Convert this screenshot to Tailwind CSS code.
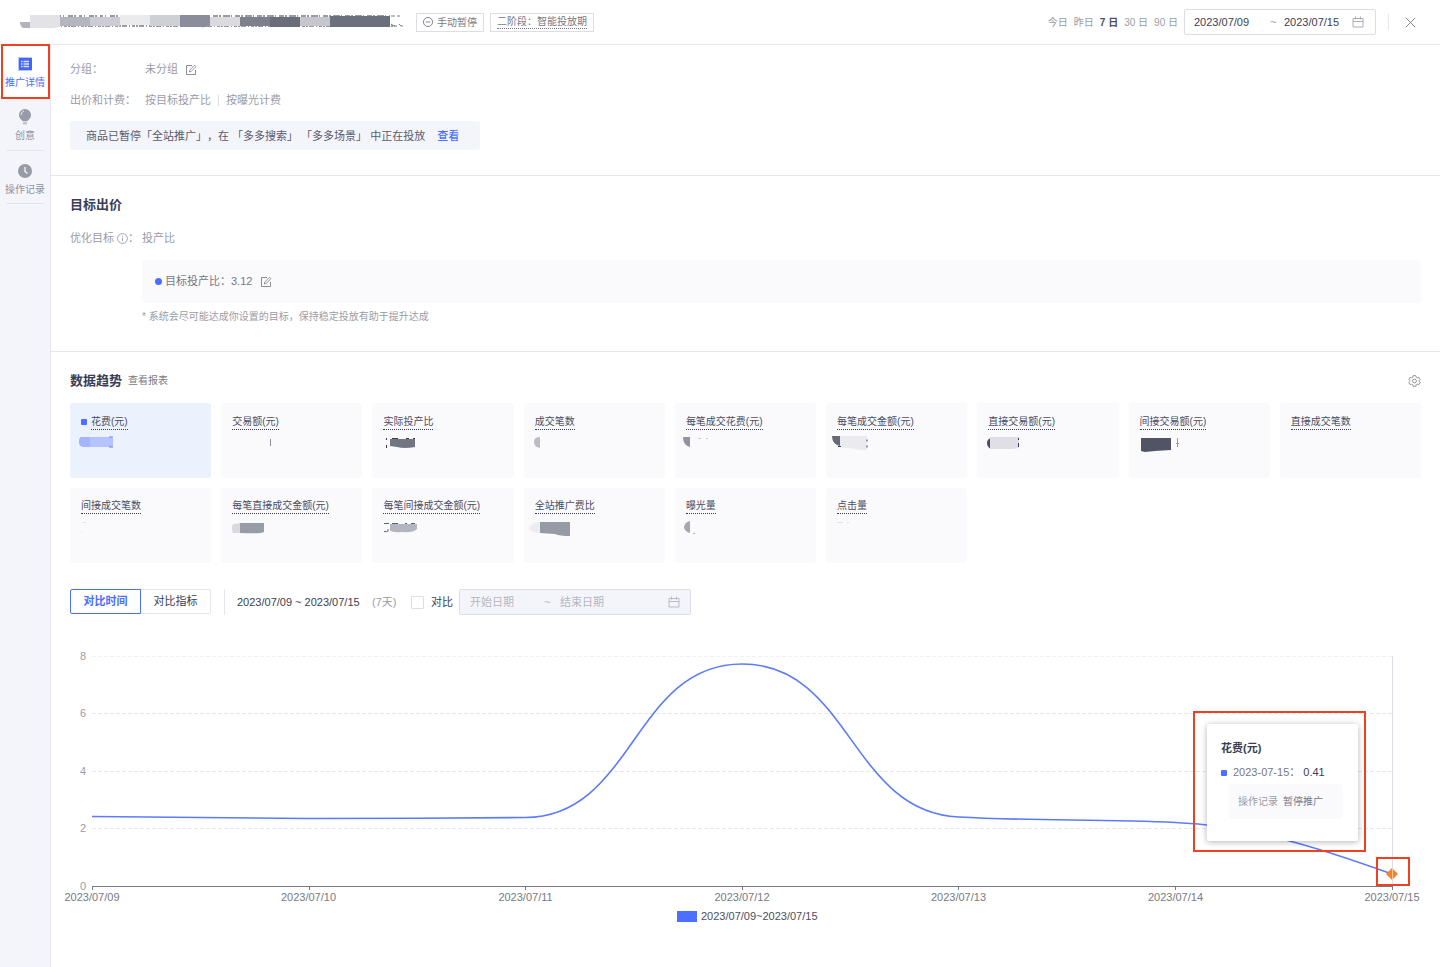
<!DOCTYPE html>
<html lang="zh-CN">
<head>
<meta charset="utf-8">
<meta name="viewport" content="width=device-width, initial-scale=1">
<title>推广详情</title>
<script src="https://cdn.jsdelivr.net/npm/@tailwindcss/browser@4"></script>
</head>
<body class="flex min-h-screen flex-col bg-white font-['Liberation_Sans','Noto_Sans_CJK_SC',sans-serif] text-[11px] leading-[17px] text-[#9a9ca7] [text-spacing-trim:space-all]">
<svg class="hidden">
  <symbol id="edit" viewBox="0 0 12 12" fill="none" stroke="currentColor"><path d="M7 1.500H1.500v9h9V6"/><path d="M4.300 8l.5-2L9.600 1.200l1.400 1.400L6.200 7.400z" stroke-width=".9"/></symbol>
  <symbol id="calendar" viewBox="0 0 12 12" fill="none" stroke="currentColor"><path d="M1 2.500h10v8.500H1zM1 5.500h10M3.500 .5v3M8.500 .5v3" stroke-width=".9"/></symbol>
</svg>

<header class="flex h-[45px] items-center border-b border-[#e6e7ee] pr-[24px] pl-[19px]">
  <svg class="h-[14px] w-[386px] shrink-0" viewBox="19 15 386 14" role="img" aria-label="商品名称">
    <g stroke="#777a86" stroke-width="1.500" fill="none">
      <path d="M37 16H120" stroke-dasharray="3 2 1 4 5 1 2 3"/>
      <path d="M213 16H390" stroke-dasharray="5 1 2 2 7 1 1 3"/>
      <path d="M51 26H395" stroke-dasharray="2 1 5 2 1 2 3 1"/>
      <path d="M391 16h4m2 0h3M391 24l3 2m2-1v2m3-3l2 2h2" stroke-width="1"/>
    </g>
    <path d="M20 22h10v6h-7q-3-2-3-6z" fill="#b3b3bb"/>
    <path d="M30 15h30v12q-8 2-15 1H30z" fill="#e2e2e7"/>
    <path d="M60 17h30v9H60z" fill="#b5b6bd"/>
    <path d="M90 17h30v9H90z" fill="#cdcbd3"/>
    <path d="M120 15h30v10h-30z" fill="#ebebee"/>
    <path d="M150 15h30v11h-30z" fill="#cfd0d4"/>
    <path d="M180 15h30v10q-4 3-9 2h-21z" fill="#8b8e9a"/>
    <path d="M210 17h30v9h-30z" fill="#dadadf"/>
    <path d="M240 17h30v9h-30z" fill="#7e808d"/>
    <path d="M270 17h30v10h-30z" fill="#6a6d7a"/>
    <path d="M300 17h30v9h-30z" fill="#c7c5cd"/>
    <path d="M330 16h60v11h-60z" fill="#6b707d"/>
  </svg>
  <button class="ml-[11px] flex h-[19px] w-[68px] shrink-0 items-center justify-center gap-1 border border-[#dcdde6] text-[10px] text-[#777985]">
    <svg class="size-[10px]" viewBox="0 0 11 11" fill="none" stroke="currentColor"><circle cx="5.500" cy="5.500" r="5"/><path d="M3 5.500h5"/></svg><span>手动暂停</span>
  </button>
  <div class="ml-[6px] flex h-[19px] w-[104px] shrink-0 items-center justify-center border border-[#dcdde6] text-[10px] text-[#777985]"><span class="border-b border-dotted border-[#777985] leading-[13px] whitespace-nowrap">二阶段：智能投放期</span></div>
  <nav class="ml-auto flex shrink-0 gap-[6px] text-[10px] whitespace-nowrap" aria-label="时间范围">
    <button>今日</button><button>昨日</button><button class="font-bold text-[#4b4d61]">7 日</button><button>30 日</button><button>90 日</button>
  </nav>
  <div class="ml-[6px] flex h-[26px] w-[192px] shrink-0 items-center rounded-[2px] border border-[#dcdde6] px-[9px] text-[#3b3d54]">
    <input aria-label="开始日期" class="w-[76px] min-w-0" value="2023/07/09">
    <span class="w-[14px] text-[#9a9ca7]">~</span>
    <input aria-label="结束日期" class="w-[60px] min-w-0" value="2023/07/15">
    <svg class="mr-[2px] ml-auto size-[12px] shrink-0 text-[#a3a5b0]"><use href="#calendar"/></svg>
  </div>
  <div class="ml-[12px] h-4 w-px shrink-0 bg-[#e6e7ee]"></div>
  <button aria-label="关闭" class="ml-4 shrink-0"><svg class="size-[11px]" viewBox="0 0 11 11" fill="none" stroke="#858793"><path d="M.8.8l9.400 9.400M10.200.8L.8 10.200"/></svg></button>
</header>

<div class="flex flex-1">
  <aside class="w-[51px] shrink-0 border-r border-[#e6e7ee] bg-[#f4f5fa] text-[10px] leading-[14px]">
    <nav class="flex flex-col items-center">
      <div class="relative flex w-full flex-col items-center bg-white">
        <a href="#detail" class="flex h-[54px] w-full flex-col items-center pt-[12px] text-[#4c6fff]">
          <svg class="size-[14px]" viewBox="0 0 14 14"><path fill="#b9c7ff" d="M0 0h14v14H0z"/><path fill="#4565f8" d="M1 1h13v12H1z"/><path d="M3 4.500h1.500M3 7h1.500M3 9.500h1.500M5.500 4.500H11M5.500 7H11M5.500 9.500H11" stroke="#dbe2ff" stroke-width="1.300"/></svg>
          <span class="mt-[5px] whitespace-nowrap">推广详情</span>
        </a>
        <div class="absolute -top-px left-px h-[55px] w-[49px] border-2 border-[#f1401d]"></div>
      </div>
      <a href="#creative" class="flex h-[51px] w-full flex-col items-center pt-[10px] text-[#8f919c]">
        <svg class="h-[16px] w-[14px]" viewBox="0 0 14 16"><path d="M7 0a6 6 0 0 1 6 6c0 3-2 4.500-3.500 6h-5C3 10.500 1 9 1 6a6 6 0 0 1 6-6z" fill="#989aa5"/><path d="M3 6q0-3 3-4" stroke="#e6e7ee" fill="none"/><path d="M5 12.500h4v3H5z" fill="#c6c7ce"/></svg>
        <span class="mt-[4px]">创意</span>
      </a>
      <div class="h-px w-[38px] bg-[#e3e4ec]"></div>
      <a href="#log" class="flex h-[52px] w-full flex-col items-center pt-[13px] text-[#8f919c]">
        <svg class="size-[14px]" viewBox="0 0 14 14"><circle cx="7" cy="7" r="7" fill="#989aa5"/><path d="M7 3v4.500l2.500 2" stroke="#fff" fill="none" stroke-width="1.200"/></svg>
        <span class="mt-[5px] whitespace-nowrap">操作记录</span>
      </a>
      <div class="h-px w-[38px] bg-[#e3e4ec]"></div>
    </nav>
  </aside>

  <main class="min-w-0 flex-1">
    <section class="border-b border-[#e6e7ee] px-[19px] pt-[14px] pb-[25px]">
      <dl class="grid grid-cols-[75px_1fr] gap-y-[10px] leading-[21px]">
        <dt>分组：</dt>
        <dd class="flex items-center gap-[7px]">未分组 <button aria-label="编辑分组"><svg class="block size-[12px] text-[#8b8d99]"><use href="#edit"/></svg></button></dd>
        <dt>出价和计费：</dt>
        <dd class="flex items-center"><span>按目标投产比</span><span class="mx-[7px] h-[11px] w-px bg-[#dcdde6]"></span><span>按曝光计费</span></dd>
      </dl>
      <div class="mt-[10px] flex h-[29px] w-[410px] items-center rounded-[3px] bg-[#f4f5fa] px-4 pt-px whitespace-nowrap text-[#595b6d]">
        <span>商品已暂停「全站推广」，在 「多多搜索」 「多多场景」 中正在投放</span>
        <a href="#view" class="ml-3 font-medium text-[#4c6fff]">查看</a>
      </div>
    </section>

    <section class="border-b border-[#e6e7ee] px-[19px] pt-5 pb-[24px]">
      <h2 class="text-[13px] font-bold text-[#3b3d54]">目标出价</h2>
      <div class="mt-[17px] flex"><span class="flex w-[72px] items-center">优化目标<svg class="ml-[3px] size-[11px]" viewBox="0 0 11 11" fill="none" stroke="currentColor" stroke-width=".9"><circle cx="5.500" cy="5.500" r="4.900"/><path d="M5.500 4.700v3.500M5.500 2.600v1.100"/></svg>：</span><span>投产比</span></div>
      <div class="mt-[13px] ml-[72px] flex h-[43px] items-center rounded-[3px] bg-[#fafafd] pl-[13px] text-[#777985]">
        <span class="mr-[3px] size-[7px] rounded-full bg-[#4c6fff]"></span>目标投产比：3.12
        <button aria-label="编辑目标投产比" class="ml-[8px]"><svg class="block size-[12px] text-[#8b8d99]"><use href="#edit"/></svg></button>
      </div>
      <p class="mt-1 ml-[72px] text-[10px] leading-5">* 系统会尽可能达成你设置的目标，保持稳定投放有助于提升达成</p>
    </section>

    <section class="px-[19px] pt-5">
      <div class="flex items-center">
        <h2 class="text-[13px] font-bold text-[#3b3d54]">数据趋势</h2>
        <a href="#report" class="ml-[6px] pt-px text-[10px] leading-4 text-[#777985]">查看报表</a>
        <button aria-label="设置" class="ml-auto"><svg class="block h-[12px] w-[13px]" viewBox="0 0 13 12" fill="none" stroke="#858793" stroke-width=".9" stroke-linejoin="round"><path d="M5.300.6h2.400l.5 1.500 1.200.7 1.600-.3 1.200 2-1.100 1.200v.6l1.100 1.200-1.200 2-1.600-.3-1.200.7-.5 1.500H5.300l-.5-1.500-1.200-.7-1.600.3-1.200-2 1.100-1.200v-.6L.8 4.500l1.200-2 1.600.3 1.200-.7z"/><circle cx="6.500" cy="6" r="1.900"/></svg></button>
      </div>

      <div class="mt-[14px] grid grid-cols-9 gap-[10px] text-[10px] leading-[15px] text-[#4b4d61]">
        <div class="h-[75px] rounded-[3px] bg-[#ecf1fe] pt-[11px] pl-[5px]">
          <div class="ml-[6px] flex items-center"><span class="mr-1 size-[6px] rounded-[1px] bg-[#4c6fff]"></span><span class="border-b border-dotted border-[#3b3d54] whitespace-nowrap">花费(元)</span></div>
          <svg class="block h-[24px] w-[60px]" viewBox="0 0 60 24"><path d="M6 7h30q3 0 2 5v5H8q-4-1-4-5t2-5z" fill="#b4c2fe"/><path d="M6 7h9v10H8q-4-1-4-5t2-5z" fill="#a5b5fb"/><path d="M34 7h4M34 17h4" stroke="#6583fb"/></svg>
        </div>
        <div class="h-[75px] rounded-[3px] bg-[#fafafd] pt-[11px] pl-[5px]">
          <div class="ml-[6px] flex"><span class="border-b border-dotted border-[#3b3d54] whitespace-nowrap">交易额(元)</span></div>
          <svg class="block h-[24px] w-[60px]" viewBox="0 0 60 24"><path d="M44.500 9v7" stroke="#8b8d99"/></svg>
        </div>
        <div class="h-[75px] rounded-[3px] bg-[#fafafd] pt-[11px] pl-[5px]">
          <div class="ml-[6px] flex"><span class="border-b border-dotted border-[#3b3d54] whitespace-nowrap">实际投产比</span></div>
          <svg class="block h-[24px] w-[60px]" viewBox="0 0 60 24"><path d="M13 9h25v8q-11 2-18 0l-7-1z" fill="#737582"/><path d="M9.500 8v2m0 5v3M15 8.500h6M29 8.500h3M36 8.500h2" stroke="#3b3d54"/></svg>
        </div>
        <div class="h-[75px] rounded-[3px] bg-[#fafafd] pt-[11px] pl-[5px]">
          <div class="ml-[6px] flex"><span class="border-b border-dotted border-[#3b3d54] whitespace-nowrap">成交笔数</span></div>
          <svg class="block h-[24px] w-[60px]" viewBox="0 0 60 24"><path d="M11 7v11q-6-1-6-6t6-5z" fill="#bbbcc5"/></svg>
        </div>
        <div class="h-[75px] rounded-[3px] bg-[#fafafd] pt-[11px] pl-[5px]">
          <div class="ml-[6px] flex"><span class="border-b border-dotted border-[#3b3d54] whitespace-nowrap">每笔成交花费(元)</span></div>
          <svg class="block h-[24px] w-[60px]" viewBox="0 0 60 24"><path d="M3 7h7v10q-7-2-7-10z" fill="#9193a0"/><path d="M18 8.500h3m5 0h2" stroke="#c9cad1"/></svg>
        </div>
        <div class="h-[75px] rounded-[3px] bg-[#fafafd] pt-[11px] pl-[5px]">
          <div class="ml-[6px] flex"><span class="border-b border-dotted border-[#3b3d54] whitespace-nowrap">每笔成交金额(元)</span></div>
          <svg class="block h-[24px] w-[60px]" viewBox="0 0 60 24"><path d="M1 6h8v10Q1 14 1 6z" fill="#686a78"/><path d="M9 6h27v14q-11 0-17-2-5 1-10-2z" fill="#ebebef"/><path d="M7 16.500h3m26-7v2m0 4v2" stroke="#3b3d54"/></svg>
        </div>
        <div class="h-[75px] rounded-[3px] bg-[#fafafd] pt-[11px] pl-[5px]">
          <div class="ml-[6px] flex"><span class="border-b border-dotted border-[#3b3d54] whitespace-nowrap">直接交易额(元)</span></div>
          <svg class="block h-[24px] w-[60px]" viewBox="0 0 60 24"><path d="M9 8q-4 1-4 5t4 6z" fill="#4b4d61"/><path d="M8 7h29v11q-6 1-14 1H8z" fill="#dfdfe5"/><path d="M36.500 8v2m0 3v4" stroke="#3b3d54"/></svg>
        </div>
        <div class="h-[75px] rounded-[3px] bg-[#fafafd] pt-[11px] pl-[5px]">
          <div class="ml-[6px] flex"><span class="border-b border-dotted border-[#3b3d54] whitespace-nowrap">间接交易额(元)</span></div>
          <svg class="block h-[24px] w-[60px]" viewBox="0 0 60 24"><path d="M7 8h30v12l-16 1-10 1-4-1z" fill="#525466"/><path d="M43.500 8v9M42 13.500h3" stroke="#9a9ca7"/></svg>
        </div>
        <div class="h-[75px] rounded-[3px] bg-[#fafafd] pt-[11px] pl-[5px]">
          <div class="ml-[6px] flex"><span class="border-b border-dotted border-[#3b3d54] whitespace-nowrap">直接成交笔数</span></div>
        </div>
        <div class="h-[75px] rounded-[3px] bg-[#fafafd] pt-[10px] pl-[5px]">
          <div class="ml-[6px] flex"><span class="border-b border-dotted border-[#3b3d54] whitespace-nowrap">间接成交笔数</span></div>
          <svg class="block h-[24px] w-[60px]" viewBox="0 0 60 24"><path d="M8 8.500h3M6 17.500h1" stroke="#dedfe4"/></svg>
        </div>
        <div class="h-[75px] rounded-[3px] bg-[#fafafd] pt-[10px] pl-[5px]">
          <div class="ml-[6px] flex"><span class="border-b border-dotted border-[#3b3d54] whitespace-nowrap">每笔直接成交金额(元)</span></div>
          <svg class="block h-[24px] w-[60px]" viewBox="0 0 60 24"><path d="M14 9v10H7q-2-5 0-9z" fill="#d9d9df"/><path d="M14 9h24v9q-4 2-24 1z" fill="#999ba6"/></svg>
        </div>
        <div class="h-[75px] rounded-[3px] bg-[#fafafd] pt-[10px] pl-[5px]">
          <div class="ml-[6px] flex"><span class="border-b border-dotted border-[#3b3d54] whitespace-nowrap">每笔间接成交金额(元)</span></div>
          <svg class="block h-[24px] w-[60px]" viewBox="0 0 60 24"><path d="M13 10h27v5q-4 4-15 3-6 1-12-1z" fill="#b4b5bf"/><path d="M7 9.500h5M11 15v2q-1 1-4 .5M15 9.500h6m7 0h2m4 0h4" stroke="#5f6171" fill="none"/></svg>
        </div>
        <div class="h-[75px] rounded-[3px] bg-[#fafafd] pt-[10px] pl-[5px]">
          <div class="ml-[6px] flex"><span class="border-b border-dotted border-[#3b3d54] whitespace-nowrap">全站推广费比</span></div>
          <svg class="block h-[24px] w-[60px]" viewBox="0 0 60 24"><path d="M11 8v11q-10 0-11-5 2-6 11-6z" fill="#ededf1"/><path d="M11 8h30v14q-10 0-15-2l-15-1z" fill="#969aa4"/></svg>
        </div>
        <div class="h-[75px] rounded-[3px] bg-[#fafafd] pt-[10px] pl-[5px]">
          <div class="ml-[6px] flex"><span class="border-b border-dotted border-[#3b3d54] whitespace-nowrap">曝光量</span></div>
          <svg class="block h-[24px] w-[60px]" viewBox="0 0 60 24"><path d="M10 7v12q-6-2-6-6 1-5 6-6z" fill="#a5a6b1"/><path d="M13 19.500h2" stroke="#b4b5bf"/></svg>
        </div>
        <div class="h-[75px] rounded-[3px] bg-[#fafafd] pt-[10px] pl-[5px]">
          <div class="ml-[6px] flex"><span class="border-b border-dotted border-[#3b3d54] whitespace-nowrap">点击量</span></div>
          <svg class="block h-[24px] w-[60px]" viewBox="0 0 60 24"><path d="M6 8.500h6m4 0h2" stroke="#e0e1e6"/></svg>
        </div>
      </div>

      <div class="mt-[26px] flex h-[26px] items-center whitespace-nowrap text-[#3b3d54]">
        <button class="h-[25px] w-[71px] self-start rounded-l-[2px] border border-[#4c6fff] font-bold text-[#4c6fff]">对比时间</button>
        <button class="h-[25px] w-[70px] self-start rounded-r-[2px] border border-l-0 border-[#e6e7ee]">对比指标</button>
        <span class="ml-[13px] h-full w-px bg-[#e6e7ee]"></span>
        <span class="ml-3 w-[135px]">2023/07/09 ~ 2023/07/15</span>
        <span class="w-[39px] text-[#9a9ca7]">(7天)</span>
        <label class="flex items-center gap-[7px]"><input type="checkbox" class="size-[13px] appearance-none rounded-[1px] border border-[#dcdde6] bg-white">对比</label>
        <div class="ml-[6px] flex h-[26px] w-[232px] items-center rounded-[2px] border border-[#dcdde6] bg-[#f4f5fa] px-[10px] text-[#b4b5bf]">
          <input disabled aria-label="对比开始日期" placeholder="开始日期" class="w-[74px] min-w-0 placeholder:text-[#b4b5bf]">
          <span class="w-4">~</span>
          <input disabled aria-label="对比结束日期" placeholder="结束日期" class="w-[70px] min-w-0 placeholder:text-[#b4b5bf]">
          <svg class="ml-auto size-[12px]"><use href="#calendar"/></svg>
        </div>
      </div>

      <div class="relative mt-[25px]">
        <svg class="block w-full overflow-visible" viewBox="70 640 1351 290" role="img" aria-label="花费趋势图" font-size="11" fill="#777985">
          <g stroke="#e4e7f3" stroke-dasharray="4 2"><path d="M92 656.500H1392" stroke="#f0f1f8"/><path d="M92 713.500H1392M92 771.500H1392M92 828.500H1392"/></g>
          <path d="M1392.500 656v230" stroke="#dcdde6"/>
          <path d="M92 886.500H1392M92.500 886v4M309.500 886v4M525.500 886v4M742.500 886v4M958.500 886v4M1175.500 886v4M1392.500 886v4" stroke="#777985"/>
          <g text-anchor="end" fill="#9a9ca7"><text x="86" y="660">8</text><text x="86" y="717">6</text><text x="86" y="775">4</text><text x="86" y="832">2</text><text x="86" y="890">0</text></g>
          <path d="M92 816.500C164 817 236 818.500 308.700 818.500C381 818.500 453 818 525.300 817.500C633.600 817 633.600 664 742 664C850.400 664 850.400 812 958.700 817C1031 821 1103 819 1175.300 822.500C1248 825 1320 848 1392 874" fill="none" stroke="#5b7bfa" stroke-width="1.600"/>
          <path d="M1392 868l6 6-6 6-6-6z" fill="#f5822a"/><path d="M1392.500 868v12" stroke="#f7c9a4"/>
          <g text-anchor="middle"><text x="92" y="901">2023/07/09</text><text x="308.500" y="901">2023/07/10</text><text x="525.500" y="901">2023/07/11</text><text x="742" y="901">2023/07/12</text><text x="958.500" y="901">2023/07/13</text><text x="1175.500" y="901">2023/07/14</text><text x="1392" y="901">2023/07/15</text></g>
          <path d="M677 911h20v11h-20z" fill="#4c6fff"/><text x="701" y="920" fill="#4b4d61">2023/07/09~2023/07/15</text>
        </svg>
        <div class="absolute top-[71px] right-[55px] h-[141px] w-[173px] border-2 border-[#f1401d] px-3 pt-[11px]">
          <div class="h-[117px] w-[151px] rounded-[2px] bg-white pt-[16px] pl-[14px] shadow-[0_1px_6px_rgba(0,0,0,0.3)]">
            <h3 class="font-bold text-[#3b3d54]">花费(元)</h3>
            <p class="mt-[7px] flex items-center whitespace-nowrap text-[#777985]"><span class="mr-[6px] size-[6px] rounded-[1px] bg-[#4c6fff]"></span>2023-07-15：<span class="ml-[3px] text-[#3b3d54]">0.41</span></p>
            <p class="mt-[3px] ml-[8px] flex h-[35px] w-[114px] items-center gap-[5px] rounded-[3px] bg-[#fafafd] pl-[9px] text-[10px] whitespace-nowrap">操作记录 <span class="text-[#777985]">暂停推广</span></p>
          </div>
        </div>
        <div class="absolute top-[217px] right-[11px] h-[29px] w-[34px] border-2 border-[#f1401d]"></div>
      </div>
    </section>
  </main>
</div>
</body>
</html>
